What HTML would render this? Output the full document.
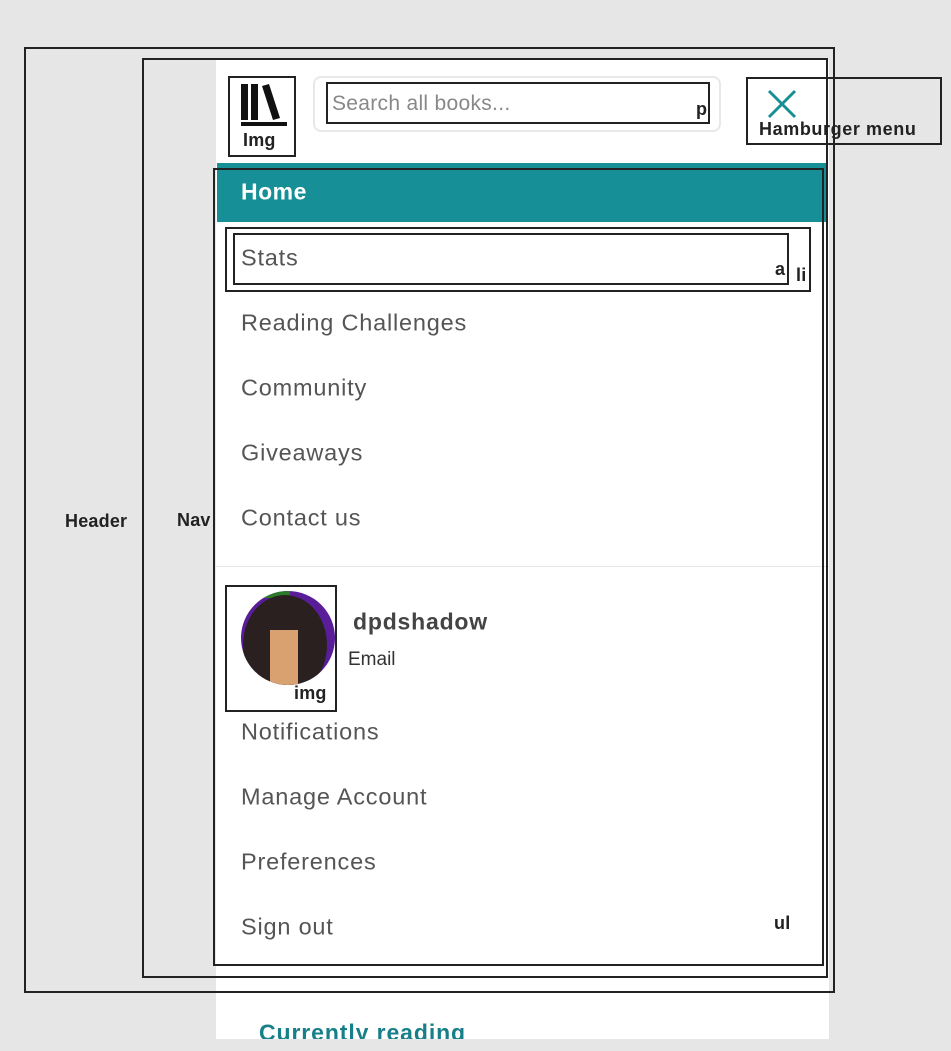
<!DOCTYPE html>
<html><head><meta charset="utf-8"><style>
body{margin:0;width:951px;height:1051px;background:#e6e6e6;position:relative;overflow:hidden;font-family:"Liberation Sans",sans-serif}
.a{position:absolute}
.box{position:absolute;border:2px solid #222;box-sizing:border-box}
.t{position:absolute;left:241px;font-size:23.5px;color:#555;line-height:1;transform:translateY(-50%);letter-spacing:0.8px}
.lbl{position:absolute;font-weight:bold;font-size:18px;color:#222;line-height:1;transform:translateY(-50%);letter-spacing:0.2px}
</style></head><body>
<div class="a" style="left:216px;top:60px;width:613px;height:979px;background:#fff"></div>
<div class="a" style="left:313px;top:76px;width:408px;height:56px;border:2px solid #e8e8e8;border-radius:8px;box-sizing:border-box"></div>
<div class="a" style="left:217px;top:163px;width:610px;height:59px;background:#178f97"></div>
<div class="a" style="left:241px;top:192px;transform:translateY(-50%);font-size:23px;font-weight:bold;color:#fff;letter-spacing:0.5px">Home</div>
<div class="a" style="left:216px;top:566px;width:613px;height:1px;background:#e6e6e6"></div>
<svg class="a" style="left:238px;top:82px" width="50" height="46" viewBox="0 0 50 46">
<rect x="3" y="2" width="7" height="36" fill="#111"/><rect x="13" y="2" width="7" height="36" fill="#111"/>
<polygon points="24,4 31,2 42,36 35,38" fill="#111"/><rect x="3" y="40" width="46" height="4" fill="#111"/></svg>
<div class="a" style="left:332px;top:104px;transform:translateY(-50%);font-size:21px;color:#888;letter-spacing:0.3px">Search all books...</div>
<svg class="a" style="left:766px;top:88px" width="32" height="32"><path d="M3 3L29 29M29 3L3 29" stroke="#178f97" stroke-width="3"/></svg>
<div class="t" style="top:258px">Stats</div>
<div class="t" style="top:323px">Reading Challenges</div>
<div class="t" style="top:388px">Community</div>
<div class="t" style="top:453px">Giveaways</div>
<div class="t" style="top:518px">Contact us</div>
<div class="t" style="top:732px">Notifications</div>
<div class="t" style="top:797px">Manage Account</div>
<div class="t" style="top:862px">Preferences</div>
<div class="t" style="top:927px">Sign out</div>
<svg class="a" style="left:240px;top:590px" width="96" height="96"><defs><clipPath id="c"><circle cx="48" cy="48" r="47"/></clipPath></defs>
<g clip-path="url(#c)"><rect width="96" height="96" fill="#5a1d9a"/><rect x="20" y="0" width="30" height="8" fill="#2a7a2a"/>
<ellipse cx="45" cy="55" rx="42" ry="50" fill="#2b2020"/><rect x="30" y="40" width="28" height="60" fill="#d9a070"/></g></svg>
<div class="a" style="left:353px;top:622px;transform:translateY(-50%);font-size:23px;font-weight:bold;color:#444;letter-spacing:0.8px">dpdshadow</div>
<div class="a" style="left:348px;top:660px;transform:translateY(-50%);font-size:19px;color:#333">Email</div>
<div class="a" style="left:259px;top:1033px;transform:translateY(-50%);font-size:23px;font-weight:bold;color:#167f87;letter-spacing:0.9px">Currently reading</div>
<div class="a" style="left:0;top:1039px;width:951px;height:12px;background:#e6e6e6"></div>
<div class="box" style="left:24px;top:47px;width:811px;height:946px"></div>
<div class="box" style="left:142px;top:58px;width:686px;height:920px"></div>
<div class="box" style="left:213px;top:168px;width:611px;height:798px"></div>
<div class="box" style="left:228px;top:76px;width:68px;height:81px"></div>
<div class="box" style="left:326px;top:82px;width:384px;height:42px"></div>
<div class="box" style="left:746px;top:77px;width:196px;height:68px"></div>
<div class="box" style="left:225px;top:227px;width:586px;height:65px"></div>
<div class="box" style="left:233px;top:233px;width:556px;height:52px"></div>
<div class="box" style="left:225px;top:585px;width:112px;height:127px"></div>
<div class="lbl" style="left:65px;top:521px">Header</div>
<div class="lbl" style="left:177px;top:520px">Nav</div>
<div class="lbl" style="left:243px;top:140px">Img</div>
<div class="lbl" style="left:696px;top:109px">p</div>
<div class="lbl" style="left:759px;top:129px;letter-spacing:0.6px">Hamburger menu</div>
<div class="lbl" style="left:775px;top:269px">a</div>
<div class="lbl" style="left:796px;top:275px">li</div>
<div class="lbl" style="left:294px;top:693px">img</div>
<div class="lbl" style="left:774px;top:923px">ul</div>
</body></html>
